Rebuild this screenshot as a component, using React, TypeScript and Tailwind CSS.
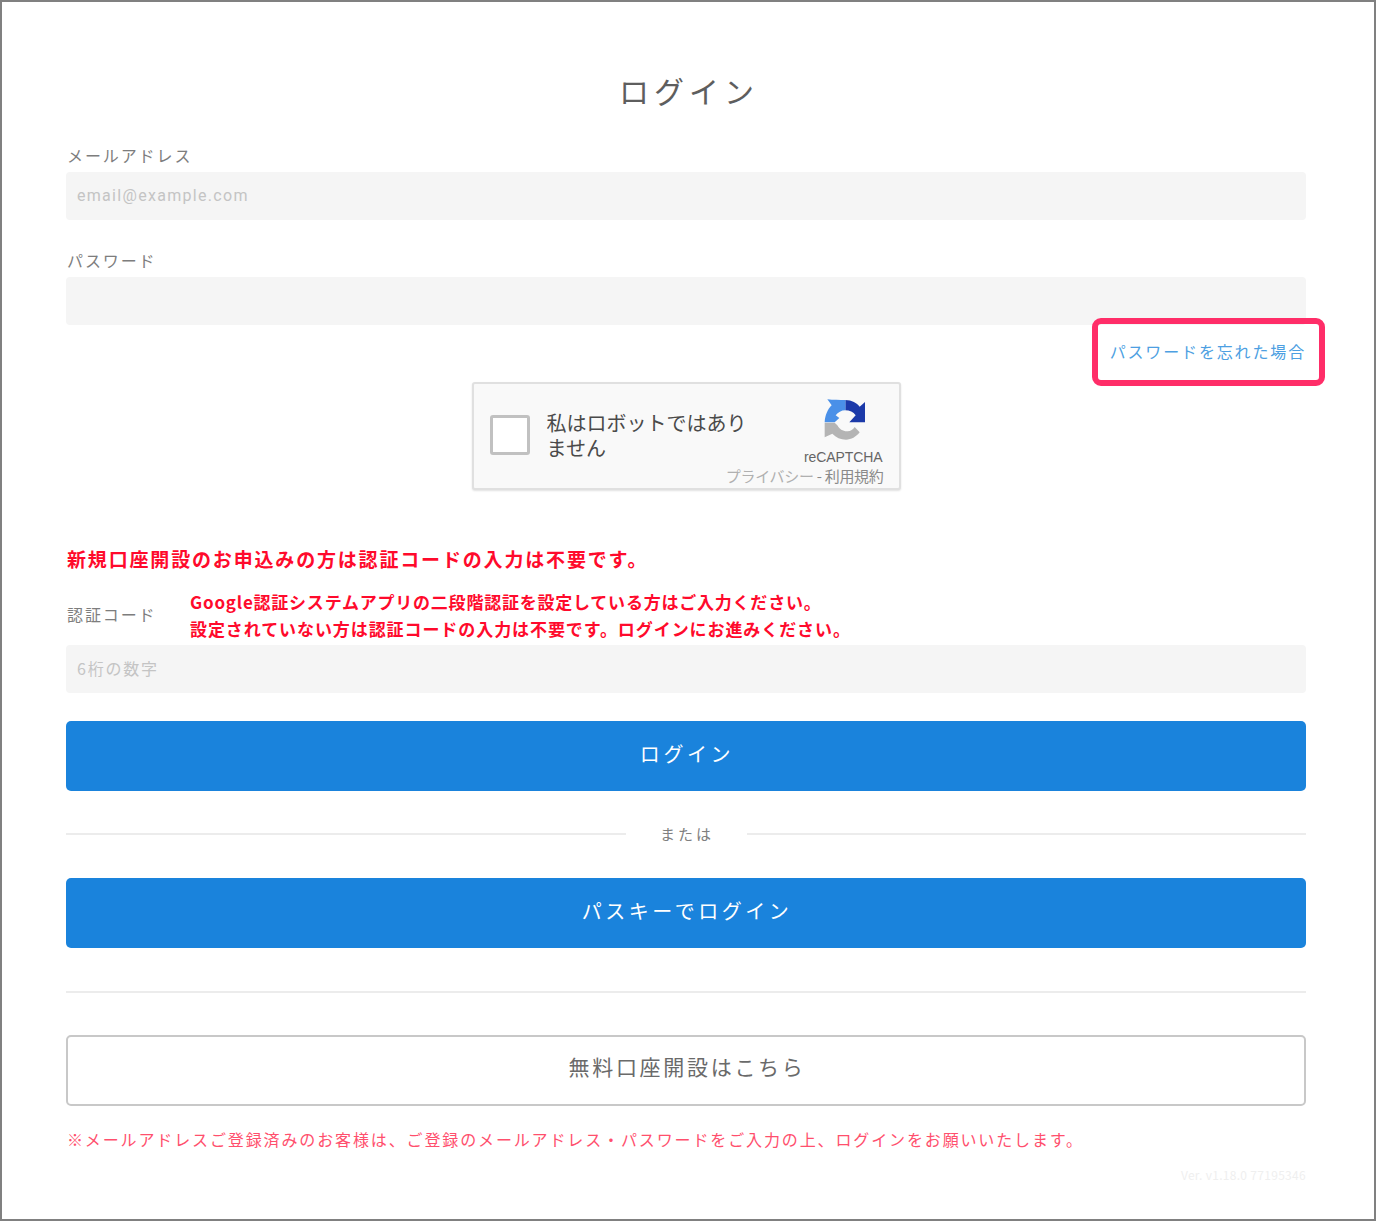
import React from "react";

const font = "font-['Noto_Sans_CJK_JP','Noto_Sans',sans-serif]";

function Field({ placeholder, type = "text", className = "" }: { placeholder?: string; type?: string; className?: string }) {
  return (
    <input
      type={type}
      placeholder={placeholder}
      className={`block h-[48px] w-full rounded-[4px] bg-[#f5f5f5] pl-[11px] pr-[10px] text-[16px] text-[#666] outline-none placeholder:text-[#c4c4c4] ${className}`}
    />
  );
}

function Label({ children }: { children: React.ReactNode }) {
  return <label className="block h-[24px] pl-[1px] text-[16px] leading-[22px] tracking-[1.9px] text-[#7d7d7d]">{children}</label>;
}

function RecaptchaLogo() {
  return (
    <svg viewBox="0 0 174 168" className="h-[56px] w-[58px]">
      <path d="M88 24C108 25 122 32 131 44L147 30V91H100L119 70C112 60 101 55 88 55Z" fill="#1c3aa9" />
      <path d="M26 91C27 70 35 52 47 40L34 22C52 24 70 24 88 24V55C76 55 66 61 59 70L70 78L56 91Z" fill="#4a90e8" />
      <path d="M26 92H56L64 100C70 112 82 119 95 118C104 118 111 112 116 105L131 121C120 135 106 143 90 143C74 143 60 136 49 125L26 136Z" fill="#b4b4b4" />
    </svg>
  );
}

function Recaptcha() {
  return (
    <div className="mx-auto mt-[18px] flex h-[108px] w-[429px] rounded-[3px] border-2 border-[#e0e0e0] bg-[#f9f9f9] shadow-[0_1px_2px_rgba(0,0,0,0.12)]">
      <div className="ml-[16px] mt-[31px] h-[40px] w-[40px] shrink-0 rounded-[3px] border-[3px] border-[#c1c1c1] bg-white" />
      <p className="ml-[17px] mt-[26px] min-w-0 flex-1 whitespace-nowrap text-[20px] leading-[25px] text-[#4a4a4a]">
        私はロボットではあり
        <br />
        ません
      </p>
      <div className="flex shrink-0 flex-col items-end pr-[15px]">
        <div className="mr-[10px] mt-[8px]">
          <RecaptchaLogo />
        </div>
        <span className="-mt-[1px] pr-[1px] font-['Liberation_Sans',sans-serif] text-[14px] leading-[20px] tracking-[-0.1px] text-[#666]">reCAPTCHA</span>
        <span className="-mt-[1px] whitespace-nowrap text-[15px] leading-[20px] tracking-[-0.3px] text-[#8a8a8a]">
          <span className="text-[#b0b0b0]">プライバシー</span> - 利用規約
        </span>
      </div>
    </div>
  );
}

export default function App() {
  return (
    <div className={`${font} h-[1221px] w-[1376px] border-2 border-[#808080] bg-white pl-[64px] pr-[68px] pt-[66px]`}>
      <h1 className="h-[48px] pl-[6px] text-center text-[30px] leading-[44px] tracking-[5px] text-[#5e5e5e]">ログイン</h1>

      <div className="mt-[28px]">
        <Label>メールアドレス</Label>
        <div className="mt-[4px]">
          <Field placeholder="email@example.com" className="pb-[2px] font-['Roboto',sans-serif] tracking-[1.3px]" />
        </div>
      </div>

      <div className="mt-[29px]">
        <Label>パスワード</Label>
        <div className="mt-[4px]">
          <Field type="password" />
        </div>
      </div>

      <div className="mt-[15px] flex justify-end">
        <a className="relative block h-[24px] text-[16px] leading-[22px] tracking-[1.85px] text-[#4d9fe2]">
          パスワードを忘れた場合
          <span className="absolute -bottom-[22px] -left-[18px] -right-[19px] -top-[22px] rounded-[9px] border-[6px] border-[#ff2d68]" />
        </a>
      </div>

      <Recaptcha />

      <p className="mt-[57px] h-[24px] pl-[1px] text-[19px] font-bold leading-[24px] tracking-[1.83px] text-[#ff0a2c]">
        新規口座開設のお申込みの方は認証コードの入力は不要です。
      </p>

      <div className="mt-[17px] flex h-[54px] items-center">
        <div className="w-[124px]">
          <Label>認証コード</Label>
        </div>
        <p className="text-[17px] font-bold leading-[27px] tracking-[0.92px] text-[#ff0a2c]">
          <span className="tracking-[0.78px]">Google認証システムアプリの二段階認証を設定している方はご入力ください。</span>
          <br />
          設定されていない方は認証コードの入力は不要です。ログインにお進みください。
        </p>
      </div>
      <div className="mt-[3px]">
        <Field placeholder="6桁の数字" className="pb-[3px] tracking-[1.8px]" />
      </div>

      <button className="mt-[28px] block h-[70px] w-full rounded-[5px] bg-[#1a83dc] pb-[4px] pl-[2px] text-[20px] tracking-[3.6px] text-white">
        ログイン
      </button>

      <div className="mt-[31px] flex h-[24px] items-center">
        <div className="h-[2px] flex-1 bg-[#ececec]" />
        <span className="w-[121px] pl-[2px] text-center text-[15px] tracking-[3px] text-[#808080]">または</span>
        <div className="h-[2px] flex-1 bg-[#ececec]" />
      </div>

      <button className="mt-[32px] block h-[70px] w-full rounded-[5px] bg-[#1a83dc] pb-[4px] pl-[2px] text-[20px] tracking-[3.5px] text-white">
        パスキーでログイン
      </button>

      <hr className="mt-[43px] border-t-2 border-[#ececec]" />

      <button className="mt-[42px] block h-[71px] w-full rounded-[5px] border-2 border-[#c8c8c8] bg-white pb-[7px] pl-[2px] text-[21px] tracking-[2.7px] text-[#6a6a6a]">
        無料口座開設はこちら
      </button>

      <p className="mt-[22px] h-[24px] pl-[1px] text-[16px] leading-[22px] tracking-[1.87px] text-[#ff4f6d]">
        ※メールアドレスご登録済みのお客様は、ご登録のメールアドレス・パスワードをご入力の上、ログインをお願いいたします。
      </p>

      <p className="mt-[14px] h-[18px] text-right text-[12px] leading-[18px] tracking-[0.3px] text-[#efefef]">Ver. v1.18.0 77195346</p>
    </div>
  );
}
